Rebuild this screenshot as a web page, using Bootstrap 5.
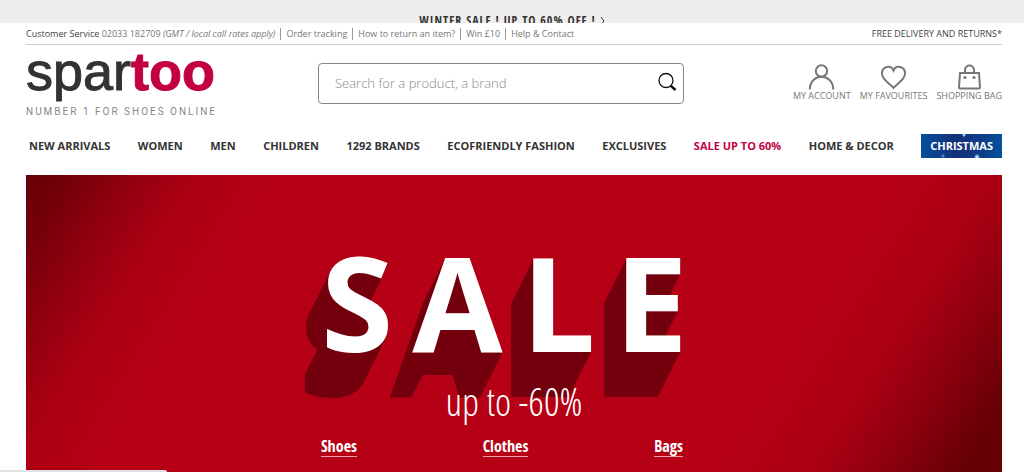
<!DOCTYPE html>
<html lang="en">
<head>
<meta charset="utf-8">
<meta name="viewport" content="width=device-width, initial-scale=1">
<title>Spartoo</title>
<link href="https://cdn.jsdelivr.net/npm/bootstrap@5.3.0/dist/css/bootstrap.min.css" rel="stylesheet">
<style>
  body { font-family: "Open Sans", "Noto Sans", sans-serif; color: #333; background: #fff; }
  a { color: inherit; text-decoration: none; }
  .shell { padding: 0 22px 0 26px; }
  .slim { font-family: "Open Sans Condensed", "Noto Sans Condensed", "Roboto Condensed", "Liberation Sans Narrow", "Open Sans", sans-serif; }

  .promo { height: 23px; padding-top: 12px; background: #efeded; font-size: 12px; line-height: 17px; letter-spacing: 1px; font-weight: 700; }
  .promo svg { width: 5px; height: 8px; vertical-align: 0; }

  .topline { height: 22px; border-bottom: 1px solid #ccc; font-size: 9px; line-height: 22px; color: #777; }
  .topline strong, .topline em { font-weight: 400; }
  .topline strong { color: #444; }
  .topline .links { gap: 5px; }
  .topline .links a { border-left: 1px solid #999; padding-left: 5px; line-height: 12px; }

  .masthead { height: 82px; }
  .brand { width: 292px; }
  .wordmark { font: 54px/52px "Liberation Sans", Arial, sans-serif; color: #333; -webkit-text-stroke: 1px #333; }
  .wordmark b { color: #c3003f; -webkit-text-stroke-color: #c3003f; }
  .tagline { font-family: Roboto, "Open Sans", sans-serif; font-size: 10px; line-height: 12px; letter-spacing: 2px; color: #888; margin-top: 9px; }
  .search { width: 366px; height: 41px; margin-top: 18px; border: 1px solid #888; border-radius: 4px; }
  .search input { font-size: 13px; padding: 0 16px; color: #555; }
  .search input::placeholder { color: #888; font-weight: 300; }
  .search button { padding: 0 6px 4px 0; }
  .search button svg { width: 20px; height: 20px; }
  .tools { font-size: 9px; line-height: 12px; color: #777; margin-top: 19px; gap: 9px; }
  .tools svg { width: 27px; height: 26px; fill: none; stroke: #777; stroke-width: 2; }

  .menu { height: 45px; padding: 4px 0 0 3px; margin-top: 3px; font-size: 11px; font-weight: 700; line-height: 24px; }
  .menu .hot { color: #c3003f; }
  .xmas { color: #fff; padding: 0 9px; background:
    radial-gradient(circle at 56px 23px, #bdf 0 1px, transparent 3px),
    radial-gradient(circle at 43px 1px, #9cf 0 1px, transparent 2px),
    radial-gradient(circle at 22px 22px, #48c 0 1px, transparent 2px),
    linear-gradient(90deg, #04509a, #15307a 42%, #123580 60%, #04509a); }

  .hero { color: #fff; background:
    linear-gradient(122deg, #680007 0, #680007e0 35px, #68000780 85px, #68000720 145px, #68000700 220px),
    linear-gradient(302deg, #680007 0, #680007 40px, #68000780 105px, #68000720 165px, #68000700 250px), #b60015; }
  .headline { font-size: 131px; line-height: 136px; font-weight: 700; letter-spacing: 19px; padding-top: 58px; margin: 0;
    text-shadow:
      0 1px #74000e, -1px 2px #74000e, -1px 3px #74000e, -2px 4px #74000e, -2px 5px #74000e, -3px 6px #74000e, -3px 7px #74000e, -4px 8px #74000e,
      -4px 9px #74000e, -5px 10px #74000e, -5px 11px #74000e, -6px 12px #74000e, -6px 13px #74000e, -7px 14px #74000e, -7px 15px #74000e, -8px 16px #74000e,
      -8px 17px #74000e, -9px 18px #74000e, -9px 19px #74000e, -10px 20px #74000e, -10px 21px #74000e, -11px 22px #74000e, -11px 23px #74000e, -12px 24px #74000e,
      -12px 25px #74000e, -13px 26px #74000e, -13px 27px #74000e, -14px 28px #74000e, -14px 29px #74000e, -15px 30px #74000e, -15px 31px #74000e, -16px 32px #74000e,
      -16px 33px #74000e, -17px 34px #74000e, -17px 35px #74000e, -18px 36px #74000e, -18px 37px #74000e, -19px 38px #74000e, -19px 39px #74000e, -20px 40px #74000e,
      -20px 41px #74000e, -21px 42px #74000e, -21px 43px #74000e, -22px 44px #74000e, -22px 45px #74000e; }
  .offer { font-family: "Open Sans Condensed Light", "OpenSans-CondensedLight", "Open Sans Condensed", sans-serif; font-size: 39px; line-height: 48px; font-weight: 300; margin: 0; padding-top: 8px; }
  .picks { width: 362px; margin-right: 24px; padding-top: 11px; font-size: 16px; line-height: 20px; font-weight: 700; }
  .picks a { border-bottom: 1px solid #e9a0a8; }

  .status { width: 167px; height: 2px; background: #dee1e6; border-top-right-radius: 2px; }
</style>
</head>
<body class="d-flex flex-column min-vh-100">
  <div class="promo slim text-center overflow-hidden">
    <a href="#">WINTER SALE ! UP TO 60% OFF !
      <svg viewBox="0 0 5 8" fill="none" stroke="#333"><path d="M1 0l3 4-3 4"/></svg></a>
  </div>

  <header class="shell">
    <div class="topline d-flex justify-content-between">
      <div class="d-flex align-items-center links">
        <span><strong>Customer Service</strong> 02033 182709 <em>(GMT / local call rates apply)</em></span>
        <a href="#">Order tracking</a>
        <a href="#">How to return an item?</a>
        <a href="#">Win £10</a>
        <a href="#">Help &amp; Contact</a>
      </div>
      <strong>FREE DELIVERY AND RETURNS*</strong>
    </div>

    <div class="masthead d-flex">
      <a class="brand" href="#">
        <div class="wordmark">spar<b>too</b></div>
        <div class="tagline">NUMBER 1 FOR SHOES ONLINE</div>
      </a>
      <form class="search d-flex align-items-center" role="search">
        <input class="form-control border-0 bg-transparent shadow-none" type="text" aria-label="Search" placeholder="Search for a product, a brand">
        <button class="btn border-0 d-flex" type="button" aria-label="Search">
          <svg viewBox="0 0 20 20" fill="none" stroke="#111"><circle cx="9" cy="8.500" r="7" stroke-width="1.300"/><path d="M13.500 13.500l5 4.500" stroke-width="2.400"/></svg>
        </button>
      </form>
      <div class="tools d-flex ms-auto text-center">
        <a href="#" class="d-flex flex-column align-items-center">
          <svg viewBox="0 0 27 26"><circle cx="13.500" cy="7" r="5.700"/><path d="M1.800 25.500c0-17 23.400-17 23.400 0"/></svg>MY ACCOUNT</a>
        <a href="#" class="d-flex flex-column align-items-center">
          <svg viewBox="0 0 27 26"><path d="M13.500 24C10 19.500 2 16 2 9.500 2 2 11 .5 13.500 6.500 16 .5 25 2 25 9.500 25 16 17 19.500 13.500 24z"/></svg>MY FAVOURITES</a>
        <a href="#" class="d-flex flex-column align-items-center">
          <svg viewBox="0 0 27 26"><path d="M4 9h19l1 14q0 1.500-1.500 1.500h-18q-1.500 0-1.500-1.500zM9 9V6c0-6 9-6 9 0v3"/><g fill="#777" stroke="none"><circle cx="9" cy="13.500" r="1.600"/><circle cx="18" cy="13.500" r="1.600"/></g></svg>SHOPPING BAG</a>
      </div>
    </div>

    <nav class="menu d-flex justify-content-between align-items-start">
      <a href="#">NEW ARRIVALS</a>
      <a href="#">WOMEN</a>
      <a href="#">MEN</a>
      <a href="#">CHILDREN</a>
      <a href="#">1292 BRANDS</a>
      <a href="#">ECOFRIENDLY FASHION</a>
      <a href="#">EXCLUSIVES</a>
      <a class="hot" href="#">SALE UP TO 60%</a>
      <a href="#">HOME &amp; DECOR</a>
      <a class="xmas" href="#">CHRISTMAS</a>
    </nav>
  </header>

  <main class="shell flex-grow-1 d-flex">
    <section class="hero flex-grow-1 d-flex flex-column align-items-center">
      <h1 class="headline">SALE</h1>
      <p class="offer">up to -60%</p>
      <div class="picks slim d-flex justify-content-between">
        <a href="#">Shoes</a>
        <a href="#">Clothes</a>
        <a href="#">Bags</a>
      </div>
    </section>
  </main>

  <div class="status position-fixed bottom-0 start-0"></div>
<script src="https://cdn.jsdelivr.net/npm/bootstrap@5.3.0/dist/js/bootstrap.bundle.min.js"></script>
</body>
</html>
